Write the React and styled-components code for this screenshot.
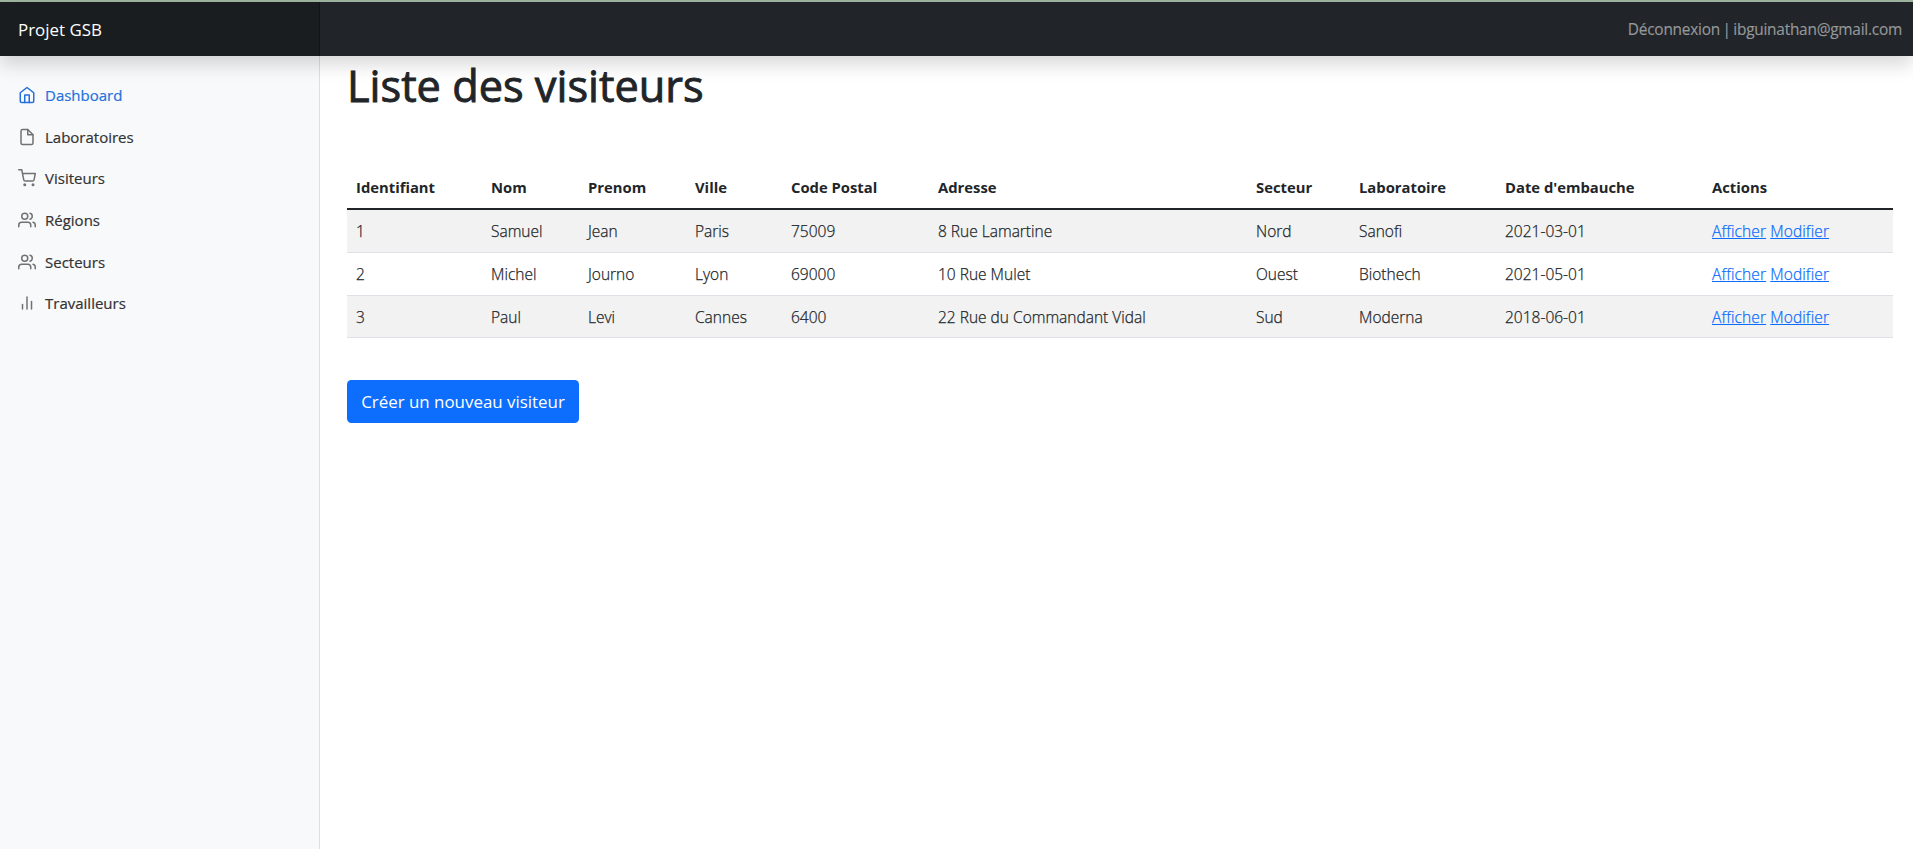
import React from 'react';
import styled, { createGlobalStyle } from 'styled-components';

const Global = createGlobalStyle`
  *, *::before, *::after { box-sizing: border-box; }
  html, body, #root { height: 100%; }
  body {
    margin: 0;
    overflow: hidden;
    background: #fff;
    color: #212529;
    font-family: "Open Sans", "Noto Sans", sans-serif;
  }
`;

const Page = styled.div`
  height: 100%;
  display: flex;
  flex-direction: column;
  border-top: 2px solid #9eb6a0;
`;

const TopBar = styled.header`
  flex: none;
  height: 54px;
  display: flex;
  align-items: center;
  justify-content: space-between;
  background: #212529;
  box-shadow: 0 9px 18px rgba(0, 0, 0, 0.15);
  position: relative;
  z-index: 1;
`;

const Brand = styled.a`
  width: 320px;
  height: 100%;
  padding: 0 18px;
  display: flex;
  align-items: center;
  background: #191d1f;
  box-shadow: inset -1px 0 0 rgba(0, 0, 0, 0.25);
  color: #fff;
  font-size: 16.9px;
`;

const SignOut = styled.a`
  padding-right: 11px;
  color: #96989a;
  font-size: 15.4px;
  letter-spacing: -0.23px;
  word-spacing: -1.2px;
  -webkit-text-stroke: 0.15px currentColor;
`;

const Body = styled.div`
  flex: 1;
  display: flex;
`;

const Sidebar = styled.nav`
  width: 320px;
  padding-top: 18.4px;
  background: #f8f9fa;
  box-shadow: inset -1px 0 0 #dddfe1;
`;

const NavLink = styled.a`
  height: 41.6px;
  padding: 0 18px;
  display: flex;
  align-items: center;
  gap: 9px;
  color: ${(p) => (p.$active ? '#2470dc' : '#333')};
  font-size: 15px;
  -webkit-text-stroke: 0.2px currentColor;
  svg { color: ${(p) => (p.$active ? '#2470dc' : '#727272')}; }
`;

const Icon = styled.svg`
  width: 18px;
  height: 18px;
  fill: none;
  stroke: currentColor;
  stroke-width: 2;
  stroke-linecap: round;
  stroke-linejoin: round;
`;

const Main = styled.main`
  flex: 1;
  padding: 0 20px 0 27px;
`;

const Title = styled.h1`
  margin: 0;
  height: 99px;
  font-size: 43.3px;
  line-height: 60px;
  font-weight: 400;
  -webkit-text-stroke: 0.9px currentColor;
`;

const Table = styled.table`
  width: 100%;
  table-layout: fixed;
  border-collapse: collapse;
`;

const Th = styled.th`
  width: ${(p) => p.$w}px;
  height: 54px;
  padding: 11px 0 0 9px;
  border-bottom: 2px solid #212529;
  text-align: left;
  white-space: nowrap;
  font-size: 14.8px;
  font-weight: 700;
`;

const Td = styled.td`
  padding: 0 0 0 9px;
  border-bottom: 1px solid #dee2e6;
  white-space: nowrap;
  font-size: 15.5px;
  font-weight: 300;
  -webkit-text-stroke: 0.25px currentColor;
`;

const Row = styled.tr`
  height: 43px;
  background: ${(p) => (p.$striped ? '#f2f2f2' : '#fff')};
  &:last-child { height: 42px; }
  &:last-child ${Td} { padding-top: 2px; }
`;

const Action = styled.a`
  color: #0d6efd;
  text-decoration: underline;
  letter-spacing: 0.12px;
`;

const Button = styled.button`
  margin-top: 42px;
  width: 232px;
  height: 43px;
  padding: 0;
  border: 0;
  border-radius: 4.4px;
  background: #0d6efd;
  color: #fff;
  font: 400 16.9px "Open Sans", "Noto Sans", sans-serif;
`;

const icons = {
  home: <><path d="M3 9l9-7 9 7v11a2 2 0 0 1-2 2H5a2 2 0 0 1-2-2z" /><polyline points="9 22 9 12 15 12 15 22" /></>,
  file: <><path d="M13 2H6a2 2 0 0 0-2 2v16a2 2 0 0 0 2 2h12a2 2 0 0 0 2-2V9z" /><polyline points="13 2 13 9 20 9" /></>,
  cart: <><circle cx="9" cy="21" r="1" /><circle cx="20" cy="21" r="1" /><path d="M1 1h4l2.68 13.39a2 2 0 0 0 2 1.61h9.72a2 2 0 0 0 2-1.61L23 6H6" /></>,
  users: <><path d="M17 21v-2a4 4 0 0 0-4-4H5a4 4 0 0 0-4 4v2" /><circle cx="9" cy="7" r="4" /><path d="M23 21v-2a4 4 0 0 0-3-3.87" /><path d="M16 3.13a4 4 0 0 1 0 7.75" /></>,
  bars: <><line x1="18" y1="20" x2="18" y2="10" /><line x1="12" y1="20" x2="12" y2="4" /><line x1="6" y1="20" x2="6" y2="14" /></>,
};

const nav = [
  ['home', 'Dashboard'],
  ['file', 'Laboratoires'],
  ['cart', 'Visiteurs'],
  ['users', 'Régions'],
  ['users', 'Secteurs'],
  ['bars', 'Travailleurs'],
];

const columns = [
  ['Identifiant', 135], ['Nom', 97], ['Prenom', 107], ['Ville', 96], ['Code Postal', 147],
  ['Adresse', 318], ['Secteur', 103], ['Laboratoire', 146], ["Date d'embauche", 207], ['Actions', 190],
];

const rows = [
  ['1', 'Samuel', 'Jean', 'Paris', '75009', '8 Rue Lamartine', 'Nord', 'Sanofi', '2021-03-01'],
  ['2', 'Michel', 'Journo', 'Lyon', '69000', '10 Rue Mulet', 'Ouest', 'Biothech', '2021-05-01'],
  ['3', 'Paul', 'Levi', 'Cannes', '6400', '22 Rue du Commandant Vidal', 'Sud', 'Moderna', '2018-06-01'],
];

export default function App() {
  return (
    <Page>
      <Global />
      <TopBar>
        <Brand>Projet GSB</Brand>
        <SignOut>Déconnexion | ibguinathan@gmail.com</SignOut>
      </TopBar>
      <Body>
        <Sidebar>
          {nav.map(([icon, label], i) => (
            <NavLink key={label} $active={i === 0}>
              <Icon viewBox="0 0 24 24">{icons[icon]}</Icon>
              {label}
            </NavLink>
          ))}
        </Sidebar>
        <Main>
          <Title>Liste des visiteurs</Title>
          <Table>
            <thead>
              <tr>{columns.map(([label, w]) => <Th key={label} $w={w}>{label}</Th>)}</tr>
            </thead>
            <tbody>
              {rows.map((row, i) => (
                <Row key={row[0]} $striped={i % 2 === 0}>
                  {row.map((cell, j) => <Td key={j}>{cell}</Td>)}
                  <Td><Action>Afficher</Action> <Action>Modifier</Action></Td>
                </Row>
              ))}
            </tbody>
          </Table>
          <Button>Créer un nouveau visiteur</Button>
        </Main>
      </Body>
    </Page>
  );
}
